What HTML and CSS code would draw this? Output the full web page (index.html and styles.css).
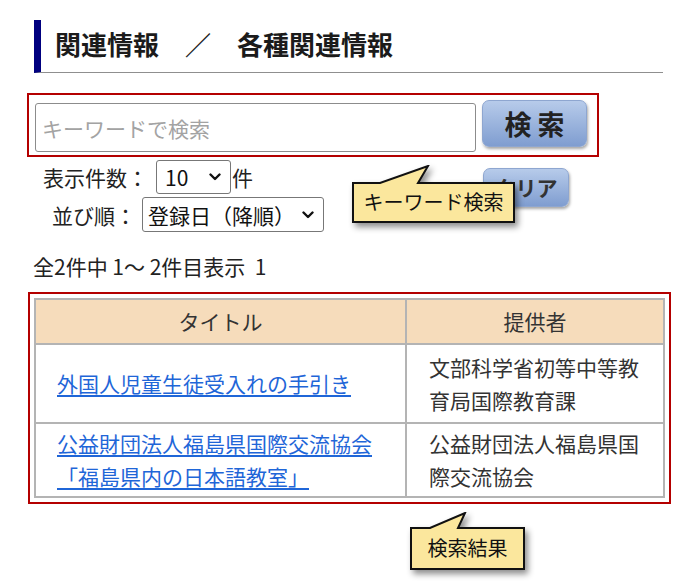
FILE: index.html
```html
<!DOCTYPE html>
<html lang="ja">
<head>
<meta charset="utf-8">
<title>関連情報</title>
<link rel="stylesheet" href="styles.css">
</head>
<body>
<div class="page">
  <h1 class="heading">関連情報　／　各種関連情報</h1>

  <div class="search-box">
    <input class="keyword" type="text" placeholder="キーワードで検索">
    <button class="btn btn-search" type="button">検 索</button>
  </div>

  <div class="options">
    <div class="opt-rows">
      <div class="opt-row row-count">
        <span class="opt-label">表示件数：</span>
        <span class="fake-select sel-count"><span>10</span>
          <svg class="chev" width="12" height="8" viewBox="0 0 12 8"><path d="M1.5 1.5 L6 6 L10.5 1.5" fill="none" stroke="#111" stroke-width="2.4" stroke-linecap="round" stroke-linejoin="round"/></svg>
        </span>
        <span class="unit">件</span>
      </div>
      <div class="opt-row row-order">
        <span class="opt-label">並び順：</span>
        <span class="fake-select sel-order"><span>登録日（降順）</span>
          <svg class="chev" width="12" height="8" viewBox="0 0 12 8"><path d="M1.5 1.5 L6 6 L10.5 1.5" fill="none" stroke="#111" stroke-width="2.4" stroke-linecap="round" stroke-linejoin="round"/></svg>
        </span>
      </div>
    </div>
    <button class="btn btn-clear" type="button">クリア</button>
  </div>

  <p class="result-count">全2件中 1～ 2件目表示&nbsp;&nbsp;1</p>

  <div class="result-box">
    <table class="results">
      <colgroup><col class="c-title"><col class="c-prov"></colgroup>
      <thead>
        <tr><th>タイトル</th><th class="col-prov">提供者</th></tr>
      </thead>
      <tbody>
        <tr class="r1">
          <td class="cell-title"><a href="#">外国人児童生徒受入れの手引き</a></td>
          <td class="cell-prov">文部科学省初等中等教育局国際教育課</td>
        </tr>
        <tr class="r2">
          <td class="cell-title"><a href="#">公益財団法人福島県国際交流協会「福島県内の日本語教室」</a></td>
          <td class="cell-prov">公益財団法人福島県国際交流協会</td>
        </tr>
      </tbody>
    </table>
  </div>

  <div class="callout callout-keyword">
    <svg class="callout-shape" width="163" height="58" viewBox="0 0 163 58">
      <path d="M1 18 H28 L76 1 L66 18 H162 V57 H1 Z" fill="#fbe79d" stroke="#111" stroke-width="2" stroke-linejoin="miter"/>
    </svg>
    <span class="callout-text">キーワード検索</span>
  </div>

  <div class="callout callout-result">
    <svg class="callout-shape" width="115" height="58" viewBox="0 0 115 58">
      <path d="M1 16 H20 L55 1 L48 16 H114 V57 H1 Z" fill="#fbe79d" stroke="#111" stroke-width="2" stroke-linejoin="miter"/>
    </svg>
    <span class="callout-text">検索結果</span>
  </div>
</div>
</body>
</html>
```

FILE: styles.css
```css
* { box-sizing: border-box; }

html, body {
  margin: 0;
  padding: 0;
  background: #fff;
}

body {
  font-family: "Noto Sans CJK JP", "Noto Sans", sans-serif;
  color: #222;
  font-size: 21px;
}

.page {
  position: relative;
  width: 700px;
  height: 583px;
  padding-top: 20px;
  overflow: hidden;
}

.heading {
  margin: 0 37px 0 34px;
  height: 53px;
  border-left: 7px solid #00007f;
  border-bottom: 1px solid #8f8f8f;
  padding: 0 0 4px 14px;
  font-size: 26px;
  font-weight: bold;
  line-height: 48px;
  color: #1b1b1b;
  white-space: nowrap;
}

.search-box {
  margin: 20px 0 0 27px;
  width: 572px;
  border: 2px solid #b40000;
  padding: 5px 10px 3px 6px;
  display: flex;
  align-items: flex-start;
}

.keyword {
  margin: 3px 0 0 0;
  width: 441px;
  height: 49px;
  border: 1px solid #8c8c8c;
  border-radius: 3px;
  padding: 0 0 0 6px;
  font-family: inherit;
  font-size: 21px;
  color: #222;
  outline: none;
}

.keyword::placeholder { color: #a3a3a3; }

.btn {
  font-family: inherit;
  color: #222;
  border: 1px solid #8ea6d0;
  border-radius: 7px;
  background: linear-gradient(#b7cbea, #7f9dd0);
  box-shadow: 1px 2px 3px rgba(0, 0, 0, 0.35);
  padding: 0;
  cursor: pointer;
}

.btn-search {
  margin-left: 6px;
  width: 105px;
  height: 47px;
  font-size: 27px;
  font-weight: bold;
  line-height: 45px;
}

.options {
  margin-top: 3px;
  display: flex;
  align-items: flex-start;
}

.opt-rows {
  flex: 0 0 483px;
}

.opt-row {
  display: flex;
  align-items: center;
  line-height: 30px;
  white-space: nowrap;
}

.row-count { padding-left: 43px; height: 34px; }
.row-order { padding-left: 52px; height: 35px; margin-top: 3px; }

.fake-select {
  display: flex;
  align-items: center;
  justify-content: space-between;
  height: 100%;
  border: 1px solid #777;
  border-radius: 3px;
  background: #fff;
  padding-right: 9px;
  color: #111;
}

.sel-count { width: 75px; margin-left: 8px; padding-left: 8px; }
.sel-order { width: 182px; margin-left: 6px; padding-left: 5px; }

.chev { flex: 0 0 auto; }

.unit { margin-left: 1px; }

.btn-clear {
  margin-top: 8px;
  width: 86px;
  height: 39px;
  font-size: 21px;
  font-weight: bold;
  line-height: 37px;
  color: #333;
}

.result-count {
  margin: 19px 0 0 33px;
  line-height: 30px;
  font-size: 21px;
  color: #222;
}

.result-box {
  margin: 11px 0 0 28px;
  width: 643px;
  border: 2px solid #b40000;
  padding: 4px;
}

.results {
  width: 631px;
  table-layout: fixed;
  border-collapse: separate;
  border-spacing: 0;
  border: 2px solid #b4b4b4;
}

.c-title { width: 369px; }
.c-prov { width: 258px; }

.results th,
.results td {
  padding: 0;
  border-bottom: 2px solid #b4b4b4;
  color: #333;
  font-weight: normal;
}

.results tr:last-child td { border-bottom: none; }

.results th {
  background: #f6dcbb;
  height: 45px;
  line-height: 43px;
  text-align: center;
}

.results .col-prov,
.results .cell-prov { border-left: 2px solid #b4b4b4; }

.results td {
  vertical-align: middle;
  line-height: 33px;
}

.cell-title { padding: 0 18px 0 21px !important; }
.cell-prov { padding: 0 18px 0 22px !important; }

.r1 td { height: 79px; }
.r2 td { height: 72px; }

.results a {
  color: #1f66d8;
  text-decoration: underline;
  text-underline-offset: 3px;
}

.callout {
  position: absolute;
}

.callout-shape {
  display: block;
  filter: drop-shadow(3px 4px 3px rgba(0, 0, 0, 0.45));
}

.callout-text {
  position: absolute;
  left: 0;
  right: 0;
  text-align: center;
  font-size: 20px;
  line-height: 28px;
  color: #111;
  white-space: nowrap;
}

.callout-keyword { left: 352px; top: 165px; width: 163px; height: 58px; }
.callout-keyword .callout-text { top: 23px; }

.callout-result { left: 410px; top: 512px; width: 115px; height: 58px; }
.callout-result .callout-text { top: 22px; }
```
